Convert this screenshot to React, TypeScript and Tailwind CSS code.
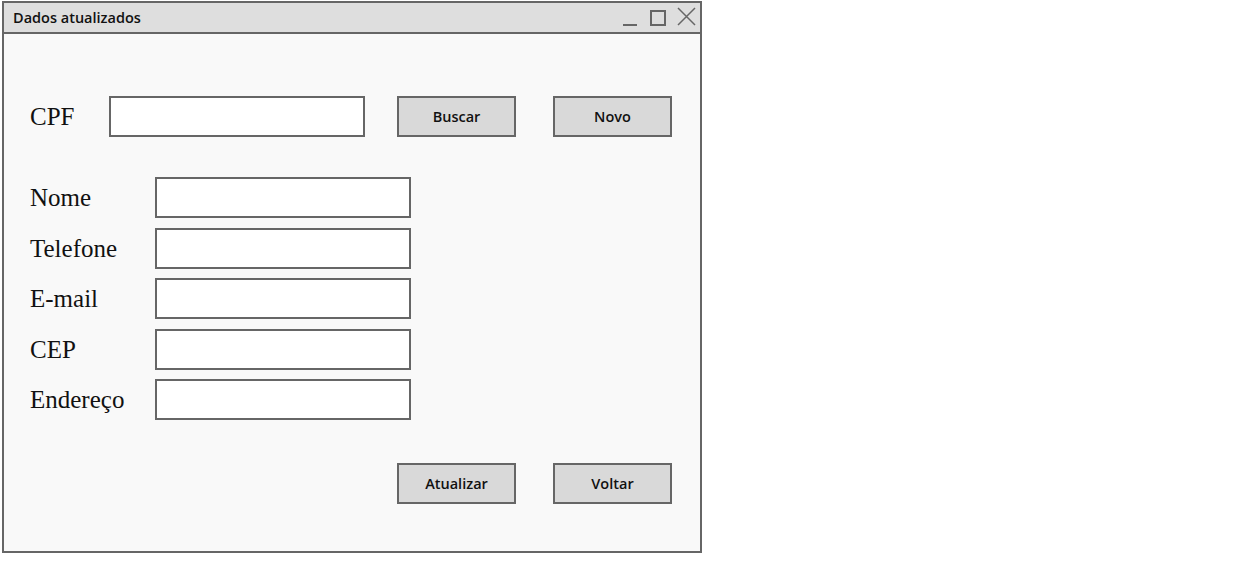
import React from "react";

const serif = { fontFamily: '"Liberation Serif", "Times New Roman", serif' };

function Btn({ label }: { label: string }) {
  return (
    <div className="w-[119px] h-[41px] border-2 border-[#666666] bg-[#d9d9d9] flex items-center justify-center text-[14.5px] font-semibold text-[#111] [font-family:'Open_Sans',sans-serif]">
      {label}
    </div>
  );
}

function Field({ label }: { label: string }) {
  return (
    <div className="flex items-center h-[41px]">
      <div className="w-[125px] text-[25px] leading-none text-[#111]" style={serif}>
        {label}
      </div>
      <div className="w-[256px] h-[41px] border-2 border-[#666666] bg-white" />
    </div>
  );
}

export default function App() {
  return (
    <div className="w-[1251px] h-[563px] bg-white">
      <div className="ml-[2px] pt-[1px]">
        <div className="w-[700px] h-[552px] border-2 border-[#666666] flex flex-col bg-[#f9f9f9]">
          <div className="h-[31px] shrink-0 border-b-2 border-[#666666] bg-[#dedede] flex items-center">
            <span className="ml-[9px] text-[14.5px] font-semibold text-[#111] [font-family:'Open_Sans',sans-serif]">
              Dados atualizados
            </span>
            <svg width="80" height="29" viewBox="0 0 80 29" className="ml-auto mr-[2px]">
              <rect x="5" y="21" width="14" height="2" fill="#666666" />
              <rect x="33" y="8" width="14" height="14" fill="none" stroke="#666666" strokeWidth="2" />
              <path d="M60 5 L77 22 M77 5 L60 22" stroke="#666666" strokeWidth="1.5" fill="none" />
            </svg>
          </div>
          <div className="flex-1 flex flex-col pl-[26px] pt-[62px]">
            <div className="flex items-center h-[41px]">
              <div className="w-[79px] text-[25px] leading-none text-[#111]" style={serif}>
                CPF
              </div>
              <div className="w-[256px] h-[41px] border-2 border-[#666666] bg-white" />
              <div className="ml-[32px]">
                <Btn label="Buscar" />
              </div>
              <div className="ml-[37px]">
                <Btn label="Novo" />
              </div>
            </div>
            <div className="mt-[40px] flex flex-col gap-[9.5px]">
              <Field label="Nome" />
              <Field label="Telefone" />
              <Field label="E-mail" />
              <Field label="CEP" />
              <Field label="Endereço" />
            </div>
            <div className="mt-[43px] pl-[367px] flex gap-[37px]">
              <Btn label="Atualizar" />
              <Btn label="Voltar" />
            </div>
          </div>
        </div>
      </div>
    </div>
  );
}
